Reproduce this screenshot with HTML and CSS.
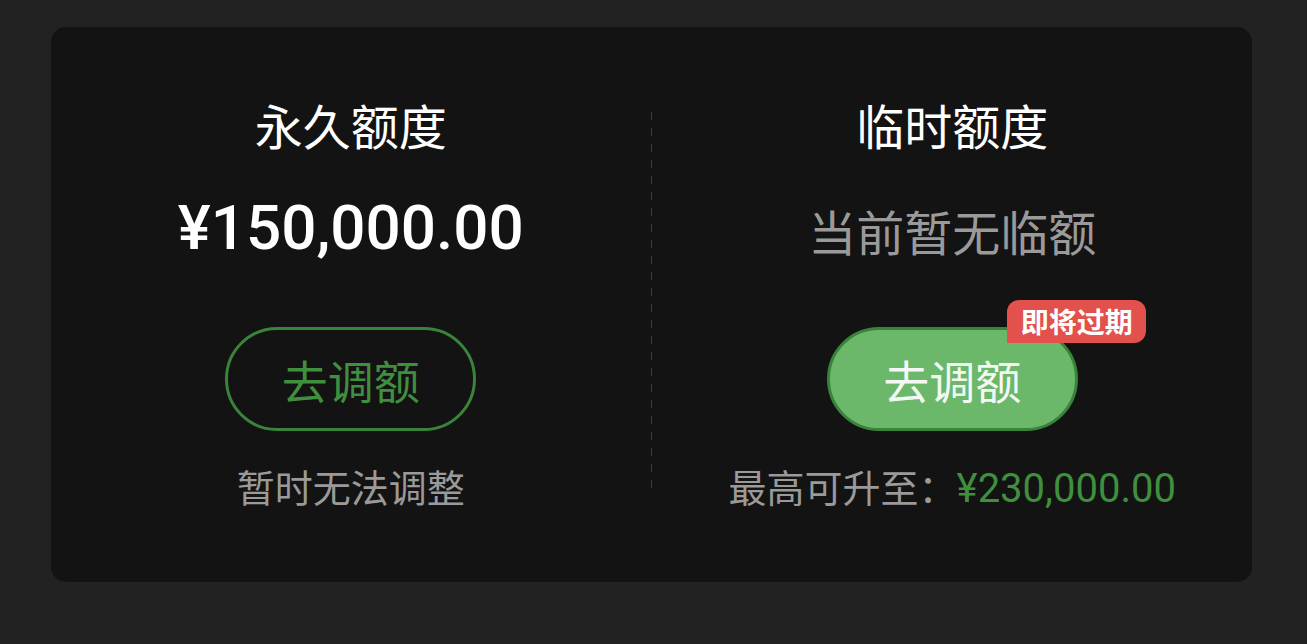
FILE: index.html
```html
<!DOCTYPE html>
<html lang="zh-CN">
<head>
    <meta charset="UTF-8">
    <meta name="viewport" content="width=device-width, initial-scale=1.0">
    <title>额度</title>
    <link rel="stylesheet" href="styles.css">
</head>
<body>
    <div class="quota-card">
        <div class="quota-col">
            <h2 class="quota-title">永久额度</h2>
            <div class="quota-amount">¥150,000.00</div>
            <div class="btn-wrap">
                <button class="adjust-btn outline">去调额</button>
            </div>
            <p class="quota-note">暂时无法调整</p>
        </div>

        <div class="divider"></div>

        <div class="quota-col">
            <h2 class="quota-title">临时额度</h2>
            <div class="quota-empty">当前暂无临额</div>
            <div class="btn-wrap temp">
                <button class="adjust-btn filled">去调额</button>
                <span class="badge">即将过期</span>
            </div>
            <p class="quota-note">最高可升至：<span class="green-num">¥230,000.00</span></p>
        </div>
    </div>
</body>
</html>
```

FILE: styles.css
```css
body {
    margin: 0;
    height: 100vh;
    background-color: #222222;
    font-family: "Noto Sans CJK SC", "Noto Sans", sans-serif;
}

.quota-card {
    display: grid;
    grid-template-columns: 1fr 2px 1fr;
    width: 1201px;
    height: 555px;
    margin: 27px 0 0 51px;
    background-color: #131313;
    border-radius: 15px;
    box-sizing: border-box;
    padding-top: 67px;
}

.quota-col {
    display: flex;
    flex-direction: column;
    align-items: center;
}

.quota-title {
    margin: 0;
    height: 60px;
    line-height: 60px;
    font-size: 48px;
    font-weight: 400;
    color: #ffffff;
}

.quota-amount {
    margin-top: 34px;
    height: 80px;
    line-height: 80px;
    font-family: Roboto, "Liberation Sans", sans-serif;
    font-size: 62px;
    font-weight: 500;
    color: #ffffff;
}

.quota-empty {
    margin-top: 36px;
    height: 80px;
    line-height: 80px;
    font-size: 48px;
    color: #9a9a9a;
}

.btn-wrap {
    position: relative;
    margin-top: 59px;
}

.btn-wrap.temp {
    margin-top: 57px;
}

.adjust-btn {
    display: block;
    width: 251px;
    height: 104px;
    border-radius: 52px;
    border: 3px solid #3a833a;
    font-family: "Noto Sans CJK SC", sans-serif;
    font-size: 46px;
    padding: 0;
    cursor: pointer;
}

.adjust-btn.outline {
    background-color: transparent;
    color: #3f8f3f;
}

.adjust-btn.filled {
    background-color: #6bb86b;
    color: #f4f8f4;
}

.badge {
    position: absolute;
    top: -27px;
    left: 180px;
    height: 43px;
    line-height: 43px;
    padding: 0 13px 0 14px;
    background-color: #e2514b;
    color: #ffffff;
    font-size: 28px;
    font-weight: 700;
    white-space: nowrap;
    border-radius: 12px 12px 12px 0;
}

.quota-note {
    margin: 31px 0 0;
    height: 48px;
    line-height: 48px;
    font-size: 38px;
    color: #9a9a9a;
}

.green-num {
    font-family: Roboto, "Liberation Sans", sans-serif;
    font-size: 40px;
    color: #3f8f3f;
}

.divider {
    margin-top: 18px;
    height: 383px;
    width: 1px;
    background-image: linear-gradient(to bottom, #3a3a3a 50%, transparent 50%);
    background-size: 1px 16px;
}
```
